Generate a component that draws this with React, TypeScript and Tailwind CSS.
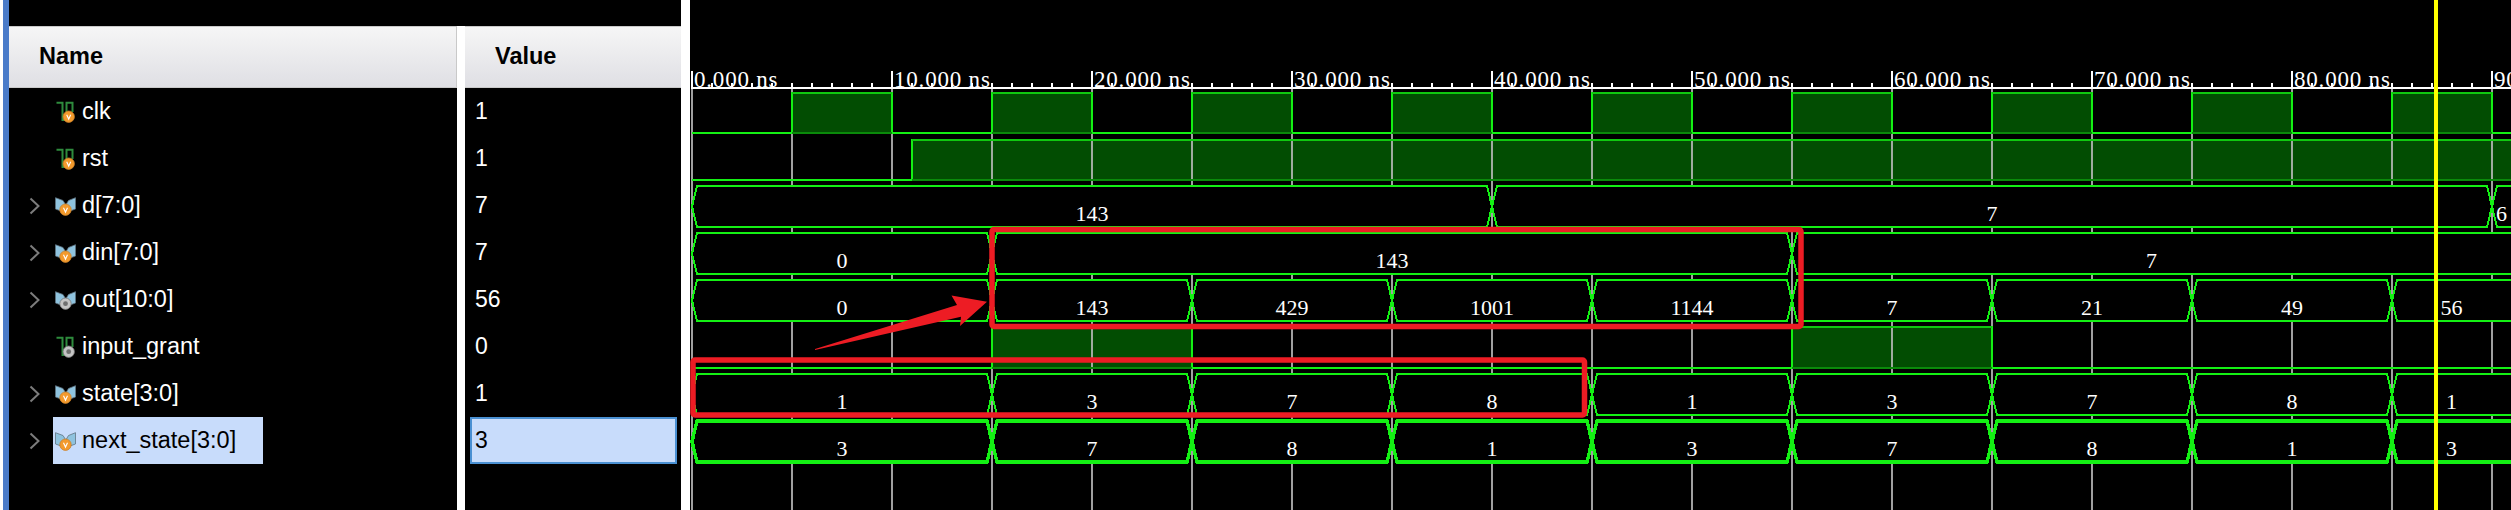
const END = 2511
const T0 = 692
const STEP = 200

interface Signal {
  name: string
  value: string
  kind: "logic" | "bus"
  gray?: boolean
  selected?: boolean
}

const signals: Signal[] = [
  { name: "clk", value: "1", kind: "logic" },
  { name: "rst", value: "1", kind: "logic" },
  { name: "d[7:0]", value: "7", kind: "bus" },
  { name: "din[7:0]", value: "7", kind: "bus" },
  { name: "out[10:0]", value: "56", kind: "bus", gray: true },
  { name: "input_grant", value: "0", kind: "logic", gray: true },
  { name: "state[3:0]", value: "1", kind: "bus" },
  { name: "next_state[3:0]", value: "3", kind: "bus", selected: true },
]

const buses: { top: number; bottom: number; width: number; segs: [number, number, string][] }[] = [
  { top: 186, bottom: 227, width: 2, segs: [[692, 1492, "143"], [1492, 2492, "7"], [2492, END, "6"]] },
  { top: 233, bottom: 274, width: 2, segs: [[692, 992, "0"], [992, 1792, "143"], [1792, END, "7"]] },
  {
    top: 280,
    bottom: 321,
    width: 2,
    segs: [
      [692, 992, "0"],
      [992, 1192, "143"],
      [1192, 1392, "429"],
      [1392, 1592, "1001"],
      [1592, 1792, "1144"],
      [1792, 1992, "7"],
      [1992, 2192, "21"],
      [2192, 2392, "49"],
      [2392, END, "56"],
    ],
  },
  {
    top: 374,
    bottom: 415,
    width: 2,
    segs: [
      [692, 992, "1"],
      [992, 1192, "3"],
      [1192, 1392, "7"],
      [1392, 1592, "8"],
      [1592, 1792, "1"],
      [1792, 1992, "3"],
      [1992, 2192, "7"],
      [2192, 2392, "8"],
      [2392, END, "1"],
    ],
  },
  {
    top: 421,
    bottom: 462,
    width: 3.5,
    segs: [
      [692, 992, "3"],
      [992, 1192, "7"],
      [1192, 1392, "8"],
      [1392, 1592, "1"],
      [1592, 1792, "3"],
      [1792, 1992, "7"],
      [1992, 2192, "8"],
      [2192, 2392, "1"],
      [2392, END, "3"],
    ],
  },
]

const clkPulses: [number, number][] = Array.from({ length: 9 }, (_, i) => [792 + i * STEP, 892 + i * STEP])
const logicRows: { high: number; low: number; pulses: [number, number][] }[] = [
  { high: 93, low: 133, pulses: clkPulses },
  { high: 140, low: 180, pulses: [[912, END + 10]] },
  { high: 327, low: 368, pulses: [[992, 1192], [1792, 1992]] },
]

const Chevron = () => (
  <svg width="12" height="18" viewBox="0 0 12 18" className="shrink-0">
    <path d="M1.5 1.5 L9.5 9 L1.5 16.5" fill="none" stroke="#7c7c7c" strokeWidth="2" />
  </svg>
)

const Badge = ({ gray, cx, cy }: { gray?: boolean; cx: number; cy: number }) => (
  <g>
    <circle cx={cx} cy={cy} r="5.7" fill={gray ? "#c4c4c4" : "#f39a2c"} stroke={gray ? "#777" : "#c9802a"} strokeWidth="0.8" />
    {gray ? (
      <circle cx={cx} cy={cy} r="2.4" fill="#6f6f6f" />
    ) : (
      <path d={`M${cx - 2} ${cy - 2} L${cx} ${cy + 2.4} L${cx + 2} ${cy - 2}`} fill="none" stroke="#fff" strokeWidth="1.1" />
    )}
  </g>
)

const SignalIcon = ({ kind, gray }: { kind: "logic" | "bus"; gray?: boolean }) => (
  <svg width="22" height="24" viewBox="0 0 22 24" className="shrink-0">
    {kind === "logic" ? (
      <>
        <path d="M1.5 2.7 H7.5 V20 H11.5 V2.7 H17.5 V12" fill="none" stroke="#2e8b3d" strokeWidth="2" />
        <Badge gray={gray} cx={13.7} cy={16.7} />
      </>
    ) : (
      <>
        <path
          d="M0.5 3.7 L8 6.5 L10.8 11 L13.5 6.5 L20.5 3.7 V15 L15 17 H6 L0.5 15 Z"
          fill="#8fc3de"
          stroke="#5f7482"
          strokeWidth="0.8"
        />
        <Badge gray={gray} cx={10.5} cy={15.7} />
      </>
    )}
  </svg>
)

const Header = ({ label, className }: { label: string; className: string }) => (
  <div
    className={`flex h-[62px] items-center border-y border-[#c9c9c9] bg-linear-to-b from-[#f6f6f6] to-[#dfdfe4] pl-[30px] text-[23.5px] font-bold text-black ${className}`}
  >
    {label}
  </div>
)

const Waves = () => {
  const ticks: number[] = []
  for (let x = T0; x <= END; x += 20) ticks.push(x)
  const grid: number[] = []
  for (let x = T0; x <= END; x += 100) grid.push(x)

  return (
    <svg width="1821" height="510" viewBox="690 0 1821 510" className="block shrink-0" shapeRendering="crispEdges">
      {logicRows.map(row =>
        row.pulses.map(([a, b]) => (
          <rect key={`${row.high}-${a}`} x={a} y={row.high} width={b - a} height={row.low - row.high} fill="#024d02" />
        )),
      )}

      {grid.map(x => (
        <rect key={x} x={x - 1} y={88} width={2} height={422} fill="#bcbcbc" opacity={0.85} />
      ))}

      {logicRows.map(row => {
        let d = `M${T0} ${row.low}`
        row.pulses.forEach(([a, b]) => {
          d += ` H${a} V${row.high} H${b} V${row.low}`
        })
        d += ` H${END + 10}`
        return (
          <g key={row.high}>
            <path d={d} fill="none" stroke="#14f014" strokeWidth="2" />
            {row.pulses.map(([a, b]) => (
              <g key={a}>
                <rect x={a} y={row.low - 1} width={b - a} height={2} fill="#0a8a0a" />
                <rect x={a} y={row.high - 1} width={b - a} height={2} fill="#10c810" />
              </g>
            ))}
          </g>
        )
      })}

      {buses.map(bus => {
        const mid = (bus.top + bus.bottom) / 2
        return bus.segs.map(([a, b, label]) => {
          const right = b === END ? END + 20 : b
          const points = `${a},${mid} ${a + 5},${bus.top} ${right - 5},${bus.top} ${right},${mid} ${right - 5},${bus.bottom} ${a + 5},${bus.bottom}`
          return (
            <g key={`${bus.top}-${a}`}>
              <polygon points={points} fill="#000" stroke="#14f014" strokeWidth={bus.width} />
              <text
                x={(a + b) / 2}
                y={bus.top + 35}
                textAnchor="middle"
                className="fill-white font-['Liberation_Serif'] text-[22px]"
                textRendering="optimizeSpeed"
              >
                {label}
              </text>
            </g>
          )
        })
      })}

      <rect x={T0 - 1} y={87} width={END - T0 + 1} height={2} fill="#fff" />
      {ticks.map((x, i) =>
        i % 10 === 0 ? (
          <g key={x}>
            <rect x={x - 1} y={71} width={2} height={17} fill="#fff" />
            <text
              x={x + 2}
              y={87}
              letterSpacing="0.8"
              className="fill-white font-['Liberation_Serif'] text-[23px]"
              textRendering="optimizeSpeed"
            >
              {i / 10 === 0 ? "0.000 ns" : `${(i / 10) * 10}.000 ns`}
            </text>
          </g>
        ) : (
          <rect key={x} x={x - 1} y={83} width={2} height={5} fill="#fff" />
        ),
      )}

      <rect x={992} y={229.5} width={809} height={97} rx={2} fill="none" stroke="#ed1c24" strokeWidth={5.5} shapeRendering="auto" />
      <rect x={693} y={360} width={891.5} height={55} rx={2} fill="none" stroke="#ed1c24" strokeWidth={5.5} shapeRendering="auto" />
      <polygon
        points="815,349 957,305 951.5,295.5 987,301.7 960,326 961,316.7 815,350"
        fill="#ed1c24"
        shapeRendering="auto"
      />

      <rect x={2434} y={0} width={4} height={510} fill="#ffff00" />
    </svg>
  )
}

export default function App() {
  return (
    <div className="flex h-[510px] w-[2511px] overflow-hidden bg-black font-['Liberation_Sans',sans-serif]">
      <div className="w-[3px] shrink-0 bg-white" />
      <div className="w-[6px] shrink-0 bg-[#4a7bc9]" />

      <div className="flex w-[672px] shrink-0 flex-col">
        <div className="h-[26px] shrink-0" />
        <div className="flex flex-1">
          <div className="w-[448px] shrink-0">
            <Header label="Name" className="border-r" />
            {signals.map(s => (
              <div key={s.name} className="flex h-[47px] items-center text-[23.5px] text-white">
                <div className="ml-[20px] w-[24px] shrink-0">{s.kind === "bus" && <Chevron />}</div>
                <div
                  className={`flex h-full items-center gap-[5px] pl-[2px] ${
                    s.selected ? "w-[210px] bg-[#c8dcfb] text-black" : ""
                  }`}
                >
                  <SignalIcon kind={s.kind} gray={s.gray} />
                  <span>{s.name}</span>
                </div>
              </div>
            ))}
          </div>

          <div className="w-[8px] shrink-0 bg-white" />

          <div className="w-[216px] shrink-0">
            <Header label="Value" className="" />
            {signals.map(s => (
              <div key={s.name} className="h-[47px] pl-[5px] text-[23px] text-white">
                <div
                  className={`flex h-full w-[207px] items-center border-2 px-[3px] ${
                    s.selected ? "border-[#4a90d2] bg-[#c8dcfb] text-black" : "border-transparent"
                  }`}
                >
                  {s.value}
                </div>
              </div>
            ))}
          </div>
        </div>
      </div>

      <div className="w-[9px] shrink-0 bg-white" />
      <Waves />
    </div>
  )
}
